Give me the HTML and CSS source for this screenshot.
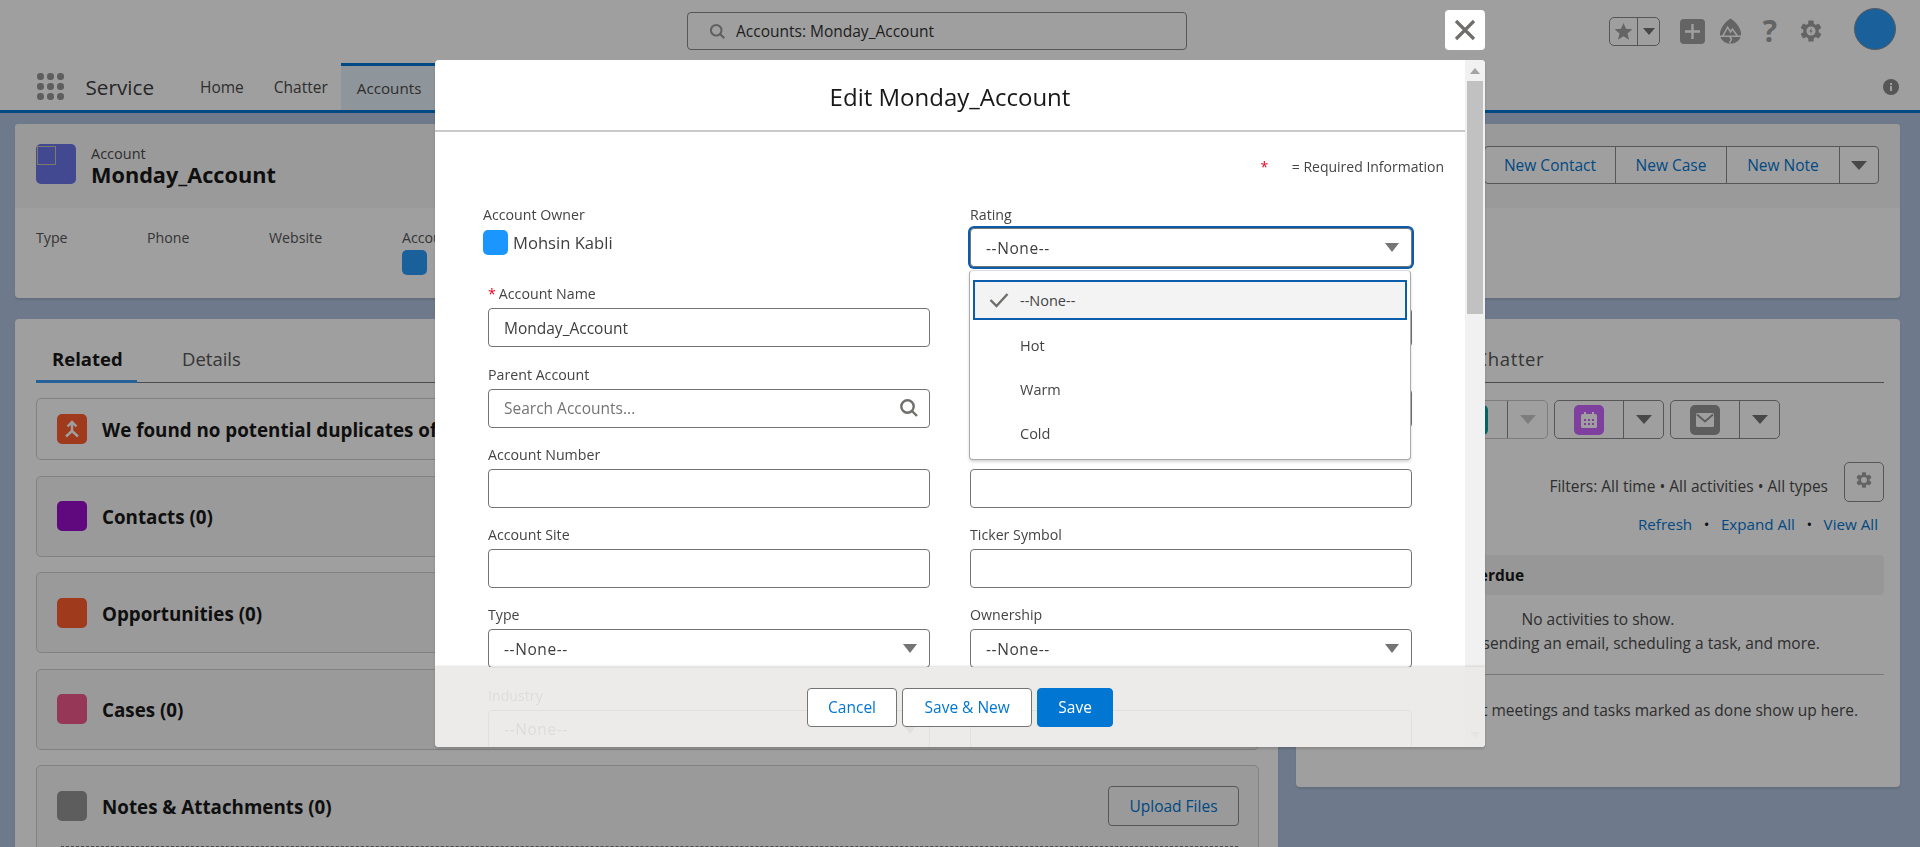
FILE: index.html
```html
<!DOCTYPE html>
<html lang="en">
<head>
    <meta charset="UTF-8">
    <meta name="viewport" content="width=device-width, initial-scale=1.0">
    <title>Monday_Account | Account | Service</title>
    <link rel="stylesheet" href="styles.css">
</head>
<body>

<header class="topbar">
    <div class="global-search">
        <svg class="search-icon" viewBox="0 0 20 20"><circle cx="8.5" cy="8.5" r="6.2"/><line x1="13" y1="13" x2="18" y2="18"/></svg>
        <span>Accounts: Monday_Account</span>
    </div>
    <div class="tools">
        <div class="fav-group">
            <span class="fav-star"><svg viewBox="0 0 20 20"><polygon points="10,1 12.6,7.2 19.3,7.7 14.2,12 15.8,18.6 10,15.1 4.2,18.6 5.8,12 0.7,7.7 7.4,7.2"/></svg></span>
            <span class="fav-more"><i class="caret caret-sm"></i></span>
        </div>
        <span class="plus-tile"><svg viewBox="0 0 25 25"><path d="M12.5 5v15M5 12.5h15"/></svg></span>
        <svg class="trail-icon" viewBox="0 0 24 28"><path class="trail-body" d="M12 1C7 4 1 11 1 17c0 6 5 10 11 10s11-4 11-10C23 11 17 4 12 1z"/><path class="trail-line" d="M4 19l5-9 3 5 2-3 5 7M1 19.500h22M11 19.500l2 3-2 4"/></svg>
        <span class="help-mark">?</span>
        <svg class="gear-icon" viewBox="0 0 24 24"><circle cx="12" cy="12" r="8.500"/><rect x="9" y="0.500" width="6" height="23" rx="1"/><rect x="9" y="0.500" width="6" height="23" rx="1" transform="rotate(60 12 12)"/><rect x="9" y="0.500" width="6" height="23" rx="1" transform="rotate(120 12 12)"/><circle class="gear-hole" cx="12" cy="12" r="5"/><path d="M13 8.500l-3 4h2l-1 3 3-4h-2z"/></svg>
        <span class="user-avatar"></span>
    </div>
</header>

<nav class="navbar">
    <div class="waffle"><i></i><i></i><i></i><i></i><i></i><i></i><i></i><i></i><i></i></div>
    <span class="app-name">Service</span>
    <a class="nav-item">Home</a>
    <a class="nav-item">Chatter</a>
    <a class="nav-item active">Accounts</a>
    <svg class="nav-info" viewBox="0 0 16 16"><circle cx="8" cy="8" r="8"/><rect x="7" y="7" width="2" height="5"/><rect x="7" y="4" width="2" height="2"/></svg>
</nav>

<main class="content">
    <section class="highlights">
        <div class="highlights-head">
            <span class="account-tile"><i></i></span>
            <div class="record-title">
                <div class="record-type">Account</div>
                <div class="record-name">Monday_Account</div>
            </div>
            <div class="action-group">
                <a class="action action-contact">New Contact</a>
                <a class="action">New Case</a>
                <a class="action action-note">New Note</a>
                <a class="action action-more"><i class="caret"></i></a>
            </div>
        </div>
        <div class="highlights-fields">
            <div>Type</div>
            <div>Phone</div>
            <div>Website</div>
            <div>Account Owner<span class="owner-dot"></span></div>
        </div>
    </section>

    <div class="columns">
        <section class="panel panel-left">
            <div class="tabs">
                <span class="tab active">Related</span>
                <span class="tab">Details</span>
            </div>
            <div class="related-list">
                <div class="related-card short">
                    <span class="tile tile-orange"><svg viewBox="0 0 30 30"><path d="M15 8v10M10.500 12.500L15 8l4.500 4.500M15 17l-6 5.500M15 17l6 5.500"/></svg></span>
                    <span class="related-title">We found no potential duplicates of this Account.</span>
                </div>
                <div class="related-card">
                    <span class="tile tile-purple"></span>
                    <span class="related-title">Contacts (0)</span>
                </div>
                <div class="related-card">
                    <span class="tile tile-orange"></span>
                    <span class="related-title">Opportunities (0)</span>
                </div>
                <div class="related-card">
                    <span class="tile tile-pink"></span>
                    <span class="related-title">Cases (0)</span>
                </div>
                <div class="related-card notes-card">
                    <div class="notes-head">
                        <span class="tile tile-grey"></span>
                        <span class="related-title">Notes &amp; Attachments (0)</span>
                        <a class="upload-btn">Upload Files</a>
                    </div>
                    <div class="dropzone"></div>
                </div>
            </div>
        </section>

        <section class="panel panel-right">
            <div class="tabs">
                <span class="tab">Activity</span>
                <span class="tab chatter-tab">Chatter</span>
            </div>
            <div class="publisher">
                <div class="split-btn disabled">
                    <span class="split-main"><span class="tile tile-teal"></span></span>
                    <span class="split-more"><i class="caret"></i></span>
                </div>
                <div class="split-btn">
                    <span class="split-main"><span class="tile tile-violet"><svg viewBox="0 0 30 30"><rect class="cal-body" x="7" y="9" width="16" height="14" rx="1.500"/><path class="cal-rings" d="M11 7v3M19 7v3"/><path class="cal-dots" d="M10 15h2M14 15h2M18 15h2M10 19h2M14 19h2M18 19h2"/></svg></span></span>
                    <span class="split-more"><i class="caret"></i></span>
                </div>
                <div class="split-btn">
                    <span class="split-main"><span class="tile tile-grey"><svg viewBox="0 0 30 30"><rect class="mail-body" x="6" y="8" width="18" height="14" rx="1.500"/><path class="mail-flap" d="M7 9.500l8 7 8-7"/></svg></span></span>
                    <span class="split-more"><i class="caret"></i></span>
                </div>
            </div>
            <div class="filters">
                <span class="filters-text">Filters: All time • All activities • All types</span>
                <span class="gear-btn"><svg class="gear-icon small" viewBox="0 0 24 24"><circle cx="12" cy="12" r="8.500"/><rect x="9" y="0.500" width="6" height="23" rx="1"/><rect x="9" y="0.500" width="6" height="23" rx="1" transform="rotate(60 12 12)"/><rect x="9" y="0.500" width="6" height="23" rx="1" transform="rotate(120 12 12)"/><circle class="gear-hole" cx="12" cy="12" r="4.500"/></svg></span>
            </div>
            <div class="activity-links">
                <a>Refresh</a><span>•</span><a>Expand All</a><span>•</span><a>View All</a>
            </div>
            <div class="overdue-bar"><span>Upcoming &amp; Overdue</span></div>
            <div class="empty-text">
                <div>No activities to show.</div>
                <div>Get started by sending an email, scheduling a task, and more.</div>
            </div>
            <div class="past-text">No past activity. Past meetings and tasks marked as done show up here.</div>
        </section>
    </div>
</main>

<div class="backdrop"></div>

<button class="modal-close" type="button"><svg viewBox="0 0 22 22"><path d="M2 2l18 18M20 2L2 20"/></svg></button>

<div class="modal">
    <div class="modal-main">
        <h2 class="modal-title">Edit Monday_Account</h2>
        <div class="required-note"><span class="req">*</span> = Required Information</div>
        <form class="edit-form">
            <div class="field">
                <label class="top-label owner-label">Account Owner</label>
                <div class="owner-value"><span class="owner-avatar"></span>Mohsin Kabli</div>
            </div>
            <div class="field rating-field">
                <label class="top-label">Rating</label>
                <div class="select focused">--None--<i class="caret"></i></div>
                <ul class="listbox">
                    <li class="selected"><svg viewBox="0 0 20 16"><path d="M1.500 8l6 6L18.500 2"/></svg>--None--</li>
                    <li>Hot</li>
                    <li>Warm</li>
                    <li>Cold</li>
                </ul>
            </div>

            <div class="field">
                <label><span class="req">*</span>Account Name</label>
                <div class="input">Monday_Account</div>
            </div>
            <div class="field">
                <label>&nbsp;</label>
                <div class="input"></div>
            </div>

            <div class="field">
                <label>Parent Account</label>
                <div class="input placeholder">Search Accounts...<svg class="search-icon" viewBox="0 0 20 20"><circle cx="8.5" cy="8.5" r="6.2"/><line x1="13" y1="13" x2="18" y2="18"/></svg></div>
            </div>
            <div class="field">
                <label>&nbsp;</label>
                <div class="input"></div>
            </div>

            <div class="field">
                <label>Account Number</label>
                <div class="input"></div>
            </div>
            <div class="field">
                <label>&nbsp;</label>
                <div class="input"></div>
            </div>

            <div class="field">
                <label>Account Site</label>
                <div class="input"></div>
            </div>
            <div class="field">
                <label>Ticker Symbol</label>
                <div class="input"></div>
            </div>

            <div class="field">
                <label>Type</label>
                <div class="select">--None--<i class="caret"></i></div>
            </div>
            <div class="field">
                <label>Ownership</label>
                <div class="select">--None--<i class="caret"></i></div>
            </div>

            <div class="field">
                <label>Industry</label>
                <div class="select">--None--<i class="caret"></i></div>
            </div>
            <div class="field">
                <label>&nbsp;</label>
                <div class="input"></div>
            </div>
        </form>
    </div>
    <div class="scrollbar">
        <span class="scroll-up"></span>
        <span class="scroll-thumb"></span>
        <span class="scroll-down"></span>
    </div>
    <div class="modal-footer">
        <button class="btn" type="button">Cancel</button>
        <button class="btn btn-wide" type="button">Save &amp; New</button>
        <button class="btn btn-brand" type="button">Save</button>
    </div>
</div>

</body>
</html>
```

FILE: styles.css
```css
* {
    box-sizing: border-box;
}

body {
    margin: 0;
    height: 847px;
    overflow: hidden;
    background-color: #b0c4df;
    color: #444;
    font-family: "Open Sans", "Noto Sans", sans-serif;
    font-size: 15.5px;
}

a {
    color: #0176d3;
}

/* triangles used on every dropdown */
.caret {
    display: inline-block;
    width: 0;
    height: 0;
    border-left: 8px solid transparent;
    border-right: 8px solid transparent;
    border-top: 9px solid #747474;
}

.caret-sm {
    border-left-width: 6px;
    border-right-width: 6px;
    border-top-width: 7px;
}

/* top bar */
.topbar {
    display: flex;
    align-items: center;
    height: 63px;
    padding: 0 24px 1px 687px;
    background-color: #fff;
}

.global-search {
    display: flex;
    align-items: center;
    gap: 10px;
    width: 500px;
    height: 38px;
    padding-left: 21px;
    border: 1px solid #8a8a8a;
    border-radius: 4px;
    color: #333;
}

.search-icon {
    width: 17px;
    height: 17px;
    flex: none;
    fill: none;
    stroke: #9a9a9a;
    stroke-width: 2.4;
}

.tools {
    display: flex;
    align-items: center;
    margin-left: auto;
}

.fav-group {
    display: flex;
    width: 51px;
    height: 29px;
    border: 1px solid #8a8a8a;
    border-radius: 5px;
}

.fav-star {
    display: flex;
    align-items: center;
    justify-content: center;
    width: 28px;
    border-right: 1px solid #8a8a8a;
}

.fav-star svg {
    width: 19px;
    height: 19px;
    fill: #a0a0a0;
}

.fav-more {
    display: flex;
    align-items: center;
    justify-content: center;
    flex: 1;
}

.plus-tile {
    width: 25px;
    height: 25px;
    margin-left: 20px;
    border-radius: 4px;
    background-color: #a0a0a0;
}

.plus-tile svg {
    display: block;
    fill: none;
    stroke: #fff;
    stroke-width: 2.4;
}

.trail-icon {
    width: 23px;
    height: 28px;
    margin-left: 14px;
}

.trail-body {
    fill: #a0a0a0;
}

.trail-line {
    fill: none;
    stroke: #fff;
    stroke-width: 1.6;
}

.help-mark {
    width: 20px;
    margin-left: 18px;
    color: #a0a0a0;
    font-size: 30px;
    font-weight: 700;
    line-height: 32px;
    text-align: center;
}

.gear-icon {
    width: 22px;
    height: 22px;
    margin-left: 20px;
    fill: #a0a0a0;
}

.gear-hole {
    fill: #fff;
}

.user-avatar {
    width: 42px;
    height: 42px;
    margin: -4px 0 0 32px;
    border-radius: 50%;
    border: 1px solid #8f8f8f;
    background-color: #2a9cfa;
}

/* navigation */
.navbar {
    display: flex;
    align-items: center;
    height: 50px;
    padding-left: 37px;
    background-color: #fff;
    border-bottom: 3px solid #0176d3;
}

.waffle {
    display: grid;
    grid-template-columns: repeat(3, 6.5px);
    gap: 3.500px;
}

.waffle i {
    width: 6.5px;
    height: 6.5px;
    border-radius: 50%;
    background-color: #979797;
}

.app-name {
    margin: 0 31px 0 22px;
    color: #3e3e3e;
    font-size: 20.7px;
}

.nav-item {
    display: flex;
    align-items: center;
    height: 47px;
    padding: 0 15px;
    color: #4a4a4a;
}

.nav-item.active {
    padding: 0 16px;
    margin-left: -2px;
    width: 120px;
    background-color: #e6f0f8;
    border-top: 3px solid #0176d3;
    font-size: 15.2px;
}

.nav-info {
    width: 16px;
    height: 16px;
    margin-left: auto;
    margin-right: 21px;
    fill: #8a8a8a;
}

.nav-info rect {
    fill: #fff;
}

/* record highlights */
.content {
    padding: 11px 20px 0 15px;
}

.highlights {
    height: 174px;
    border-radius: 4px;
    background-color: #fff;
    box-shadow: 0 2px 2px rgba(0, 0, 0, 0.1);
}

.highlights-head {
    display: flex;
    height: 84px;
    padding: 20px 21px 0;
    border-radius: 4px 4px 0 0;
    background-color: #f7f7f7;
}

.account-tile {
    width: 40px;
    height: 40px;
    padding: 2px 0 0 1px;
    border-radius: 5px;
    background-color: #6b75e8;
}

.account-tile i {
    display: block;
    width: 19px;
    height: 19px;
    border: 1px solid #c9c4b0;
}

.record-title {
    margin-left: 15px;
}

.record-type {
    color: #4a4a4a;
    font-size: 14.5px;
    line-height: 20px;
}

.record-name {
    margin-top: -1px;
    color: #181818;
    font-size: 21.7px;
    font-weight: 700;
    line-height: 24px;
}

.action-group {
    display: flex;
    height: 38px;
    margin: 2px 0 0 auto;
    border: 1px solid #8a8a8a;
    border-radius: 4px;
    background-color: #fff;
}

.action {
    display: flex;
    align-items: center;
    justify-content: center;
    width: 111px;
    border-left: 1px solid #8a8a8a;
}

.action-contact {
    width: 130px;
    border-left: none;
}

.action-note {
    width: 113px;
}

.action-more {
    width: 39px;
}

.highlights-fields {
    display: grid;
    grid-template-columns: 111px 122px 133px 1fr;
    padding: 20px 21px 0;
    color: #555;
    font-size: 14.2px;
    line-height: 20px;
}

.owner-dot {
    display: block;
    width: 25px;
    height: 25px;
    margin-top: 2px;
    border-radius: 5px;
    background-color: #2a9cfa;
}

/* page columns */
.columns {
    display: grid;
    grid-template-columns: 1263px 604px;
    gap: 18px;
    margin-top: 21px;
}

.panel {
    border-radius: 4px;
    background-color: #fff;
    box-shadow: 0 2px 2px rgba(0, 0, 0, 0.1);
}

.panel-left {
    padding: 0 20px 0 21px;
}

.panel-right {
    height: 468px;
    padding: 0 16px;
    color: #4a4a4a;
}

.tabs {
    display: flex;
    height: 64px;
    border-bottom: 1px solid #7a7a7a;
}

.tab {
    display: flex;
    align-items: flex-end;
    height: 64px;
    padding: 0 16px 11px;
    color: #555;
    font-size: 18.5px;
    line-height: 26px;
}

.tab + .tab {
    margin-left: 29px;
}

.tab.active {
    width: 101px;
    padding-bottom: 8px;
    border-bottom: 3px solid #3f9cf5;
    color: #181818;
    font-weight: 700;
}

.tab.chatter-tab {
    margin-left: 54px;
    letter-spacing: 0.6px;
}

/* related lists */
.related-list {
    display: flex;
    flex-direction: column;
    gap: 15.500px;
    padding-top: 15px;
}

.related-card {
    display: flex;
    align-items: center;
    width: 1223px;
    height: 81px;
    padding: 0 19px 0 20px;
    border: 1px solid #d0d0d0;
    border-radius: 5px;
    background-color: #f7f7f7;
}

.related-card.short {
    height: 62px;
    background-color: #fff;
}

.tile {
    display: block;
    width: 30px;
    height: 30px;
    flex: none;
    border-radius: 5px;
}

.tile svg {
    display: block;
}

.tile-orange {
    background-color: #ff5d2d;
}

.tile-orange svg {
    fill: none;
    stroke: #fff;
    stroke-width: 2.4;
}

.tile-purple {
    background-color: #9a0dcb;
}

.tile-pink {
    background-color: #f0588c;
}

.tile-grey {
    background-color: #969696;
}

.tile-teal {
    background-color: #06a59a;
}

.tile-violet {
    background-color: #cb65ff;
}

.related-title {
    margin: 2px 0 0 15px;
    color: #181818;
    font-size: 18.8px;
    font-weight: 700;
    line-height: 26px;
    white-space: nowrap;
}

.notes-card {
    display: block;
    height: 120px;
    padding: 0;
}

.notes-head {
    display: flex;
    align-items: center;
    height: 80px;
    padding: 0 19px 0 20px;
}

.upload-btn {
    display: flex;
    align-items: center;
    justify-content: center;
    width: 131px;
    height: 40px;
    margin-left: auto;
    border: 1px solid #8a8a8a;
    border-radius: 4px;
}

.dropzone {
    height: 30px;
    margin: 0 20px 0 24px;
    border-top: 1px dashed #777;
}

/* activity panel */
.publisher {
    display: flex;
    justify-content: flex-end;
    gap: 6px;
    margin-top: 17px;
    padding-right: 104px;
}

.split-btn {
    display: flex;
    width: 110px;
    height: 39px;
    border: 1px solid #8a8a8a;
    border-radius: 5px;
}

.split-main {
    display: flex;
    align-items: center;
    justify-content: center;
    flex: 1;
    border-right: 1px solid #8a8a8a;
}

.split-more {
    display: flex;
    align-items: center;
    justify-content: center;
    width: 39px;
}

.split-btn.disabled {
    border-color: #c9c9c9;
}

.split-btn.disabled .split-more .caret {
    border-top-color: #c9c9c9;
}

.cal-body,
.mail-body {
    fill: #fff;
}

.cal-rings {
    fill: none;
    stroke: #fff;
    stroke-width: 2;
}

.cal-dots {
    fill: none;
    stroke: #cb65ff;
    stroke-width: 2;
}

.mail-flap {
    fill: none;
    stroke: #969696;
    stroke-width: 2;
}

.filters {
    display: flex;
    align-items: center;
    justify-content: flex-end;
    gap: 16px;
    margin-top: 23px;
}

.filters-text {
    padding-top: 8px;
}

.gear-btn {
    display: flex;
    align-items: center;
    justify-content: center;
    width: 40px;
    height: 40px;
    border: 1px solid #8a8a8a;
    border-radius: 5px;
}

.gear-icon.small {
    width: 16px;
    height: 16px;
    margin: 0 0 5px;
}

.activity-links {
    display: flex;
    justify-content: flex-end;
    gap: 11.500px;
    margin-top: 12px;
    padding-right: 6px;
    font-size: 15.2px;
    line-height: 20px;
}

.activity-links span {
    color: #181818;
}

.overdue-bar {
    display: flex;
    align-items: center;
    height: 40px;
    margin-top: 21px;
    padding-left: 48px;
    border-radius: 4px;
    background-color: #f3f3f3;
    color: #181818;
    font-weight: 700;
}

.empty-text {
    margin-top: 12px;
    line-height: 24px;
    text-align: center;
}

.past-text {
    margin-top: 19px;
    padding-top: 23px;
    border-top: 1px solid #c0c0c0;
    line-height: 24px;
    text-align: center;
}

/* modal */
.backdrop {
    position: fixed;
    top: 0;
    right: 0;
    bottom: 0;
    left: 0;
    background-color: rgba(0, 0, 0, 0.375);
}

.modal-close {
    position: fixed;
    top: 10px;
    left: 1445px;
    width: 40px;
    height: 40px;
    padding: 9px;
    border: none;
    border-radius: 4px;
    background-color: #fff;
}

.modal-close svg {
    display: block;
    fill: none;
    stroke: #706e6b;
    stroke-width: 3.2;
}

.modal {
    position: fixed;
    top: 60px;
    left: 435px;
    display: flex;
    width: 1050px;
    height: 687px;
    overflow: hidden;
    border-radius: 4px;
    background-color: #fff;
    box-shadow: 0 2px 3px rgba(0, 0, 0, 0.16);
}

.modal-main {
    width: 1030px;
    flex: none;
}

.modal-title {
    height: 72px;
    margin: 0;
    padding-top: 13px;
    border-bottom: 2px solid #c9c9c9;
    color: #181818;
    font-size: 24px;
    font-weight: 400;
    line-height: 48px;
    text-align: center;
}

.required-note {
    margin-top: 25px;
    padding-right: 21px;
    color: #444;
    font-size: 14px;
    line-height: 20px;
    text-align: right;
}

.req {
    margin: 0 3px 0 0;
    color: #ea001e;
}

.required-note .req {
    margin-right: 20px;
}

.edit-form {
    display: grid;
    grid-template-columns: 442px 442px;
    column-gap: 40px;
    row-gap: 18.300px;
    margin-top: 28px;
    padding-left: 53px;
}

.field {
    position: relative;
    height: 62px;
}

.field label {
    display: block;
    height: 20px;
    margin-bottom: 3px;
    color: #444;
    font-size: 14.2px;
    line-height: 18px;
}

.field .top-label {
    line-height: 20px;
}

.owner-label {
    margin-left: -5px;
}

.owner-value {
    display: flex;
    align-items: center;
    gap: 5px;
    margin: 4px 0 0 -5px;
    color: #3e3e3e;
    font-size: 16.6px;
    line-height: 27px;
}

.owner-avatar {
    width: 25px;
    height: 25px;
    border-radius: 5px;
    background-color: #1b96ff;
}

.input,
.select {
    display: flex;
    align-items: center;
    height: 39px;
    padding: 0 12px 0 15px;
    border: 1px solid #747474;
    border-radius: 4px;
    background-color: #fff;
    color: #3e3e3e;
}

.select {
    letter-spacing: 0.6px;
}

.select .caret {
    margin-left: auto;
    border-left-width: 7px;
    border-right-width: 7px;
}

.select.focused {
    box-shadow: 0 0 0 2px #0b5cab;
}

.placeholder {
    color: #747474;
}

.placeholder .search-icon {
    width: 20px;
    height: 20px;
    margin-left: auto;
    margin-right: -2px;
    stroke: #706e6b;
}

.listbox {
    position: absolute;
    top: 65px;
    left: -1px;
    z-index: 2;
    width: 442px;
    height: 190px;
    margin: 0;
    padding: 9px 3px 0;
    list-style: none;
    border: 1px solid #aaa;
    border-top-color: #ddd;
    border-radius: 4px;
    background-color: #fff;
    box-shadow: 0 2px 3px rgba(0, 0, 0, 0.16);
    font-size: 14.5px;
    color: #444;
}

.listbox li {
    position: relative;
    display: flex;
    align-items: center;
    height: 44px;
    padding-left: 47px;
}

.listbox li.selected {
    height: 40px;
    margin-bottom: 3px;
    padding-left: 45px;
    border: 2px solid #0b5cab;
    background-color: #f3f3f3;
}

.listbox svg {
    position: absolute;
    left: 14px;
    width: 20px;
    height: 16px;
    fill: none;
    stroke: #706e6b;
    stroke-width: 2.4;
}

/* drawn scrollbar */
.scrollbar {
    display: flex;
    flex-direction: column;
    width: 20px;
    padding: 0 2px;
    background-color: #f1f1f1;
}

.scroll-up {
    height: 21px;
    flex: none;
    position: relative;
}

.scroll-up::after,
.scroll-down::after {
    content: "";
    position: absolute;
    left: 3px;
    border-left: 5.500px solid transparent;
    border-right: 5.500px solid transparent;
}

.scroll-up::after {
    top: 8px;
    border-bottom: 6px solid #a3a3a3;
}

.scroll-thumb {
    height: 233px;
    flex: none;
    background-color: #c1c1c1;
}

.scroll-down {
    flex: 1;
    position: relative;
}

.scroll-down::after {
    bottom: 9px;
    border-top: 6px solid #a3a3a3;
}

.modal-footer {
    position: absolute;
    right: 0;
    bottom: 0;
    left: 0;
    display: flex;
    align-items: center;
    justify-content: center;
    gap: 5px;
    height: 80px;
    background-color: rgba(234, 233, 232, 0.92);
    box-shadow: 0 -1px 2px rgba(0, 0, 0, 0.12);
}

.btn {
    height: 39px;
    padding: 0 20px;
    border: 1px solid #747474;
    border-radius: 4px;
    background-color: #fff;
    color: #0176d3;
    font-family: inherit;
    font-size: 15.5px;
}

.btn-wide {
    padding: 0 21.5px;
}

.btn-brand {
    border-color: #0176d3;
    background-color: #0176d3;
    color: #fff;
}
```
